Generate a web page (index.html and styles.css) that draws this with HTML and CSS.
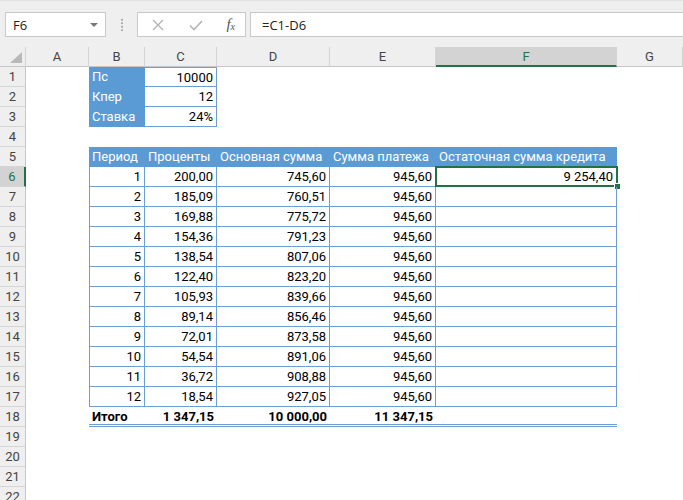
FILE: index.html
```html
<!DOCTYPE html>
<html>
<head>
<meta charset="utf-8">
<link rel="stylesheet" href="styles.css">
</head>
<body>
<div class="toolbar">
  <div class="namebox"><span class="nb-text">F6</span><span class="nb-arrow"></span></div>
  <div class="sep"><span class="dots"></span></div>
  <div class="fxbox">
    <svg class="ic" width="14" height="14" viewBox="0 0 14 14"><path d="M2 2 L12 12 M12 2 L2 12" stroke="#b4b4b4" stroke-width="1.4" fill="none"/></svg>
    <svg class="ic" width="16" height="14" viewBox="0 0 16 14"><path d="M2 7.5 L6 11.5 L14 3" stroke="#b4b4b4" stroke-width="1.6" fill="none"/></svg>
    <span class="fx">f<sub>x</sub></span>
  </div>
  <div class="formula">=C1-D6</div>
</div>

<div class="sheet">
  <div class="row hdr">
    <div class="corner"><span class="tri"></span></div>
    <div class="ch">A</div><div class="ch">B</div><div class="ch">C</div><div class="ch">D</div><div class="ch">E</div><div class="ch sel">F</div><div class="ch">G</div>
  </div>

  <div class="row"><div class="rh">1</div><div></div><div class="blue tl">Пс</div><div class="bd r top">10000</div><div></div><div></div><div></div><div></div></div>
  <div class="row"><div class="rh">2</div><div></div><div class="blue tl">Кпер</div><div class="bd r">12</div><div></div><div></div><div></div><div></div></div>
  <div class="row"><div class="rh">3</div><div></div><div class="blue tl">Ставка</div><div class="bd r">24%</div><div></div><div></div><div></div><div></div></div>
  <div class="row"><div class="rh">4</div><div></div><div></div><div></div><div></div><div></div><div></div><div></div></div>
  <div class="row"><div class="rh">5</div><div></div><div class="blue tl">Период</div><div class="blue tl">Проценты</div><div class="blue tl">Основная сумма</div><div class="blue tl">Сумма платежа</div><div class="blue tl">Остаточная сумма кредита</div><div></div></div>

  <div class="row"><div class="rh selr">6</div><div></div><div class="bd r first">1</div><div class="bd r">200,00</div><div class="bd r">745,60</div><div class="bd r">945,60</div><div class="bd r active">9 254,40<span class="selbox"></span><span class="handle"></span></div><div></div></div>
  <div class="row"><div class="rh">7</div><div></div><div class="bd r first">2</div><div class="bd r">185,09</div><div class="bd r">760,51</div><div class="bd r">945,60</div><div class="bd r"></div><div></div></div>
  <div class="row"><div class="rh">8</div><div></div><div class="bd r first">3</div><div class="bd r">169,88</div><div class="bd r">775,72</div><div class="bd r">945,60</div><div class="bd r"></div><div></div></div>
  <div class="row"><div class="rh">9</div><div></div><div class="bd r first">4</div><div class="bd r">154,36</div><div class="bd r">791,23</div><div class="bd r">945,60</div><div class="bd r"></div><div></div></div>
  <div class="row"><div class="rh">10</div><div></div><div class="bd r first">5</div><div class="bd r">138,54</div><div class="bd r">807,06</div><div class="bd r">945,60</div><div class="bd r"></div><div></div></div>
  <div class="row"><div class="rh">11</div><div></div><div class="bd r first">6</div><div class="bd r">122,40</div><div class="bd r">823,20</div><div class="bd r">945,60</div><div class="bd r"></div><div></div></div>
  <div class="row"><div class="rh">12</div><div></div><div class="bd r first">7</div><div class="bd r">105,93</div><div class="bd r">839,66</div><div class="bd r">945,60</div><div class="bd r"></div><div></div></div>
  <div class="row"><div class="rh">13</div><div></div><div class="bd r first">8</div><div class="bd r">89,14</div><div class="bd r">856,46</div><div class="bd r">945,60</div><div class="bd r"></div><div></div></div>
  <div class="row"><div class="rh">14</div><div></div><div class="bd r first">9</div><div class="bd r">72,01</div><div class="bd r">873,58</div><div class="bd r">945,60</div><div class="bd r"></div><div></div></div>
  <div class="row"><div class="rh">15</div><div></div><div class="bd r first">10</div><div class="bd r">54,54</div><div class="bd r">891,06</div><div class="bd r">945,60</div><div class="bd r"></div><div></div></div>
  <div class="row"><div class="rh">16</div><div></div><div class="bd r first">11</div><div class="bd r">36,72</div><div class="bd r">908,88</div><div class="bd r">945,60</div><div class="bd r"></div><div></div></div>
  <div class="row"><div class="rh">17</div><div></div><div class="bd r first">12</div><div class="bd r">18,54</div><div class="bd r">927,05</div><div class="bd r">945,60</div><div class="bd r"></div><div></div></div>

  <div class="row"><div class="rh">18</div><div></div><div class="tot tl">Итого</div><div class="tot r">1 347,15</div><div class="tot r">10 000,00</div><div class="tot r">11 347,15</div><div class="tot"></div><div></div></div>
  <div class="row"><div class="rh">19</div><div></div><div></div><div></div><div></div><div></div><div></div><div></div></div>
  <div class="row"><div class="rh">20</div><div></div><div></div><div></div><div></div><div></div><div></div><div></div></div>
  <div class="row"><div class="rh">21</div><div></div><div></div><div></div><div></div><div></div><div></div><div></div></div>
  <div class="row"><div class="rh">22</div><div></div><div></div><div></div><div></div><div></div><div></div><div></div></div>
</div>
</body>
</html>
```

FILE: styles.css
```css
html, body {
  margin: 0;
  padding: 0;
}
body {
  width: 683px;
  height: 500px;
  overflow: hidden;
  background: #ffffff;
  font-family: Roboto, "Noto Sans", sans-serif;
  color: #000;
}

/* ---------- formula bar ---------- */
.toolbar {
  height: 47px;
  box-sizing: border-box;
  background: #efefef;
  display: flex;
  align-items: flex-start;
  padding-top: 11px;
  border-top: 1px solid #e2e2e2;
}
.namebox {
  margin-left: 5px;
  width: 101px;
  height: 25px;
  box-sizing: border-box;
  background: #fff;
  border: 1px solid #c8c8c8;
  display: flex;
  align-items: center;
  justify-content: space-between;
  padding: 0 7px 0 7px;
}
.nb-text {
  font-family: "Open Sans", "Noto Sans", sans-serif;
  font-size: 13px;
  color: #222;
}
.nb-arrow {
  width: 0;
  height: 0;
  border-left: 4px solid transparent;
  border-right: 4px solid transparent;
  border-top: 4px solid #777;
}
.sep {
  width: 31px;
  height: 25px;
  display: flex;
  align-items: center;
  justify-content: center;
}
.dots {
  width: 2px;
  height: 14px;
  background-image: radial-gradient(circle, #a8a8a8 0.9px, transparent 1.1px);
  background-size: 2px 3.5px;
}
.fxbox {
  width: 109px;
  height: 25px;
  box-sizing: border-box;
  background: #fff;
  border: 1px solid #c8c8c8;
  display: flex;
  align-items: center;
  padding: 0 10px 0 13px;
  gap: 0;
  justify-content: space-between;
}
.fx {
  font-family: "Liberation Serif", serif;
  font-style: italic;
  font-size: 15px;
  color: #555;
  line-height: 1;
}
.fx sub {
  font-size: 10px;
  vertical-align: -1px;
}
.formula {
  margin-left: 4px;
  flex: 1;
  height: 25px;
  box-sizing: border-box;
  background: #fff;
  border: 1px solid #c8c8c8;
  border-right: none;
  display: flex;
  align-items: center;
  padding-left: 11px;
  font-family: "Open Sans", "Noto Sans", sans-serif;
  font-size: 13px;
  color: #222;
}

/* ---------- sheet ---------- */
.row {
  display: grid;
  grid-template-columns: 26px 63px 56px 72px 113px 106px 181px 66px;
  height: 20px;
}
.row > div {
  box-sizing: border-box;
  height: 20px;
  font-size: 13px;
  line-height: 19px;
  white-space: nowrap;
  overflow: visible;
  position: relative;
}
.hdr {
  background: #efefef;
}
.hdr > div {
  border-right: 1px solid #d5d5d5;
  border-bottom: 1px solid #c6c6c6;
  text-align: center;
  color: #444;
  font-size: 13px;
  line-height: 20px;
}
.corner {
  position: relative;
}
.tri {
  position: absolute;
  right: 3px;
  bottom: 3px;
  width: 0;
  height: 0;
  border-left: 12px solid transparent;
  border-bottom: 11px solid #b9b9b9;
}
.ch.sel {
  background: #d3d3d3;
  border-bottom: 2px solid #217346;
  color: #217346;
}
.rh {
  background: #efefef;
  border-right: 1px solid #c6c6c6;
  border-bottom: 1px solid #d5d5d5;
  text-align: center;
  color: #444;
}
.rh.selr {
  background: #d3d3d3;
  border-right: 2px solid #217346;
  color: #217346;
}

.blue {
  background: #5b9bd5;
  color: #fff;
}
.tl {
  text-align: left;
  padding-left: 3px;
}
.r {
  text-align: right;
  padding-right: 3px;
}
.bd {
  border-right: 1px solid #6e9fd2;
  border-bottom: 1px solid #6e9fd2;
}
.bd.first {
  border-left: 1px solid #6e9fd2;
}
.bd.top {
  border-top: 1px solid #6e9fd2;
}
.tot {
  font-weight: bold;
  border-bottom: 3px double #6e9fd2;
}
.active .selbox {
  position: absolute;
  left: -1px;
  top: -1px;
  right: -2px;
  bottom: -1px;
  border: 2px solid #217346;
}
.active .handle {
  position: absolute;
  right: -5px;
  bottom: -4px;
  width: 5px;
  height: 5px;
  background: #217346;
  border: 1px solid #fff;
}
```
